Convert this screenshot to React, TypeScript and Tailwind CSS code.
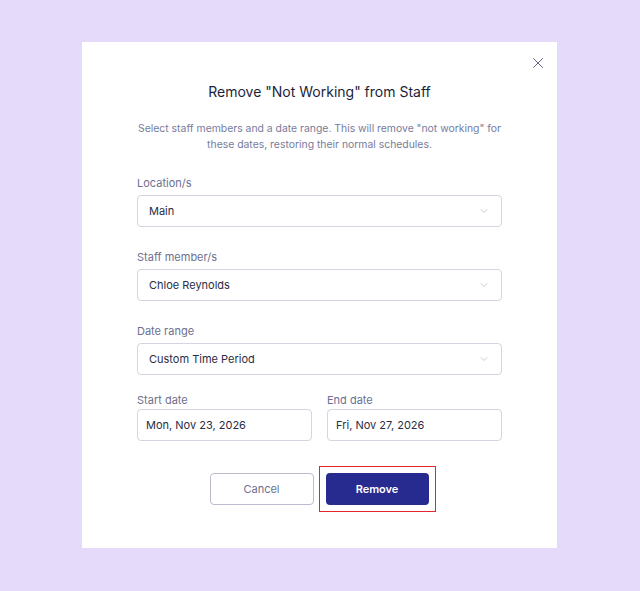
import { X, ChevronDown } from "lucide-react";

function Label({ children, tight }: { children: React.ReactNode; tight?: boolean }) {
    return (
        <div className={tight ? "text-[11px] text-[#6c7091] mb-[2px] leading-[14px]" : "text-[11px] text-[#6c7091] mb-[5px] leading-[14px]"}>
            {children}
        </div>
    );
}

function Select({ value }: { value: string }) {
    return (
        <div className="h-[32px] border border-[#d3d5e3] rounded-[4px] flex items-center justify-between pl-[11px] pr-[11px] text-[11px] text-[#2a2d45]">
            <span>{value}</span>
            <ChevronDown size={12} strokeWidth={1.5} className="text-[#b7bacd]" />
        </div>
    );
}

function DateInput({ value }: { value: string }) {
    return (
        <div className="h-[32px] border border-[#d3d5e3] rounded-[4px] flex items-center pl-[8px] text-[11px] text-[#2a2d45]">
            {value}
        </div>
    );
}

export default function App() {
    return (
        <div
            className="w-[640px] h-[591px] bg-[#e6dafa] pt-[42px] pl-[82px]"
            style={{ fontFamily: "Inter, 'Noto Sans', sans-serif" }}
        >
            <div className="w-[475px] h-[506px] bg-white relative px-[55px] pt-[40px]">
                <button className="absolute right-[10px] top-[12px] text-[#5d6185]">
                    <X size={18} strokeWidth={1.3} />
                </button>
                <h1 className="text-center text-[14px] text-[#1c1f3b] leading-[20px]">
                    Remove "Not Working" from Staff
                </h1>
                <p className="text-center text-[10.4px] leading-[16px] text-[#777b9c] mt-[19px]">
                    Select staff members and a date range. This will remove "not working" for
                    <br />
                    these dates, restoring their normal schedules.
                </p>
                <div className="mt-[23px] flex flex-col gap-[23px]">
                    <div>
                        <Label>Location/s</Label>
                        <Select value="Main" />
                    </div>
                    <div>
                        <Label>Staff member/s</Label>
                        <Select value="Chloe Reynolds" />
                    </div>
                    <div>
                        <Label>Date range</Label>
                        <Select value="Custom Time Period" />
                    </div>
                </div>
                <div className="mt-[18px] grid grid-cols-2 gap-[15px]">
                    <div>
                        <Label tight>Start date</Label>
                        <DateInput value="Mon, Nov 23, 2026" />
                    </div>
                    <div>
                        <Label tight>End date</Label>
                        <DateInput value="Fri, Nov 27, 2026" />
                    </div>
                </div>
                <div className="mt-[25px] flex justify-center items-center gap-[5px] pl-[6px]">
                    <button className="w-[104px] h-[32px] border border-[#b9bccf] rounded-[4px] text-[11px] text-[#6c7091]">
                        Cancel
                    </button>
                    <div className="border border-[#e3262c] p-[6px]">
                        <button className="w-[103px] h-[32px] bg-[#272a8f] rounded-[4px] text-[11px] font-semibold text-white">
                            Remove
                        </button>
                    </div>
                </div>
            </div>
        </div>
    );
}
